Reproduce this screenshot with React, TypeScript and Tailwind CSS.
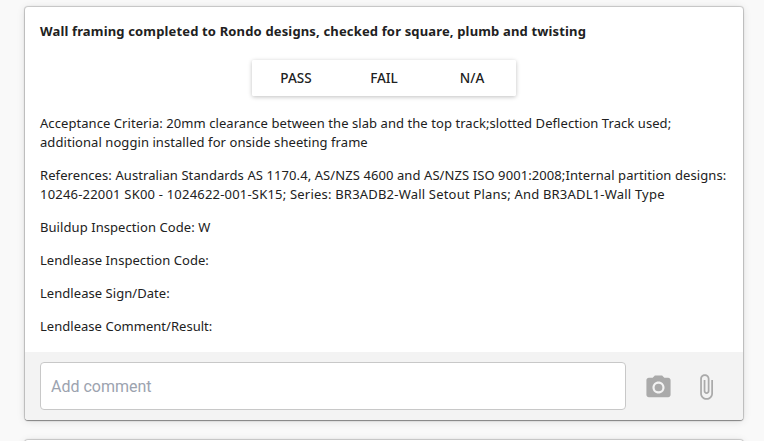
import React from "react";

const criteria: { text: string; tracking: string }[][] = [
  [
    { text: "Acceptance Criteria: 20mm clearance between the slab and the top track;slotted Deflection Track used;", tracking: "tracking-[0.065px]" },
    { text: "additional noggin installed for onside sheeting frame", tracking: "tracking-[0.065px]" },
  ],
  [
    { text: "References: Australian Standards AS 1170.4, AS/NZS 4600 and AS/NZS ISO 9001:2008;Internal partition designs:", tracking: "tracking-[0.085px]" },
    { text: "10246-22001 SK00 - 1024622-001-SK15; Series: BR3ADB2-Wall Setout Plans; And BR3ADL1-Wall Type", tracking: "tracking-[0.2px]" },
  ],
  [{ text: "Buildup Inspection Code: W", tracking: "tracking-[0.07px]" }],
  [{ text: "Lendlease Inspection Code:", tracking: "tracking-[0.05px]" }],
  [{ text: "Lendlease Sign/Date:", tracking: "tracking-[0.05px]" }],
  [{ text: "Lendlease Comment/Result:", tracking: "tracking-[0.03px]" }],
];

function CameraIcon() {
  return (
    <svg className="size-[29px]" viewBox="0 0 24 24" fill="currentColor" aria-hidden="true">
      <circle cx="12" cy="12" r="3.2" />
      <path d="M9 2L7.17 4H4c-1.1 0-2 .9-2 2v12c0 1.1.9 2 2 2h16c1.1 0 2-.9 2-2V6c0-1.100-.9-2-2-2h-3.170L15 2H9zm3 15c-2.760 0-5-2.240-5-5s2.240-5 5-5 5 2.240 5 5-2.240 5-5 5z" />
    </svg>
  );
}

function ClipIcon() {
  return (
    <svg className="size-[28px]" viewBox="0 0 24 24" fill="currentColor" aria-hidden="true">
      <path d="M16.5 6v11.5c0 2.210-1.790 4-4 4s-4-1.790-4-4V5c0-1.380 1.120-2.500 2.500-2.500s2.500 1.120 2.500 2.500v10.500c0 .55-.45 1-1 1s-1-.45-1-1V6H10v9.500c0 1.380 1.120 2.500 2.500 2.500s2.500-1.120 2.500-2.500V5c0-2.210-1.790-4-4-4S7 2.790 7 5v12.500c0 3.040 2.460 5.500 5.500 5.500s5.500-2.460 5.500-5.500V6h-1.500z" />
    </svg>
  );
}

export default function App() {
  return (
    <main className="h-[441px] overflow-hidden bg-[#f9f9f9] pt-[7px] pl-[25px] font-['Noto_Sans','Open_Sans',sans-serif] text-[#212121]">
      <section className="flex h-[413px] w-[718px] flex-col overflow-hidden rounded-[3px] bg-white shadow-[0_0_1px_1px_rgba(0,0,0,0.18),0_1px_1px_rgba(0,0,0,0.32),0_1px_8px_rgba(0,0,0,0.12)]">
        <div className="flex-1 px-[15px] pt-[15px]">
          <h2 className="text-[13px] leading-[19px] font-bold tracking-[0.152px] whitespace-nowrap">
            Wall framing completed to Rondo designs, checked for square, plumb and twisting
          </h2>
          <div className="mx-auto mt-[19px] flex w-[264px] rounded-[2px] shadow-[0_1px_4px_rgba(0,0,0,0.25)]">
            {["PASS", "FAIL", "N/A"].map((label) => (
              <button key={label} className="h-9 w-[88px] rounded-[2px] bg-white pt-px text-[13.5px] font-medium">
                {label}
              </button>
            ))}
          </div>
          <div className="mt-[18px] flex flex-col gap-[14px] text-[13px] leading-[19px] whitespace-nowrap">
            {criteria.map((lines) => (
              <p key={lines[0].text}>
                {lines.map((line) => (
                  <span key={line.text} className={`block ${line.tracking}`}>{line.text}</span>
                ))}
              </p>
            ))}
          </div>
        </div>
        <footer className="flex h-[68px] items-center bg-[#f3f3f3] pl-[15px] text-[#aaa]">
          <input
            className="h-12 w-[586px] rounded-[4px] border border-[#c8c8c8] bg-white px-[10px] font-[Roboto,sans-serif] text-base outline-none placeholder:text-[#9ca3af]"
            placeholder="Add comment"
          />
          <button className="mt-[3px] ml-[17.5px]" aria-label="Add photo"><CameraIcon /></button>
          <button className="mt-[2px] ml-[19.5px]" aria-label="Attach file"><ClipIcon /></button>
        </footer>
      </section>
      <section className="mt-[20px] h-10 w-[718px] rounded-[3px] bg-white shadow-[0_0_1px_1px_rgba(0,0,0,0.18),0_1px_8px_rgba(0,0,0,0.12)]" />
    </main>
  );
}
